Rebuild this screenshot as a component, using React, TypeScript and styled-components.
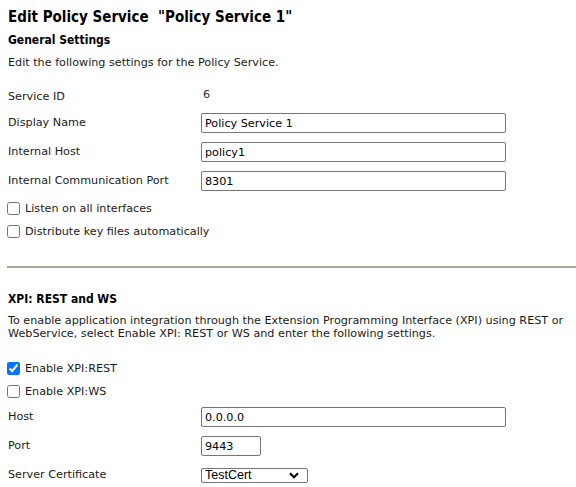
import React from "react";
import styled, { createGlobalStyle } from "styled-components";

const GlobalStyle = createGlobalStyle`
  body {
    margin: 0;
    background: #fff;
    color: #1a1a1a;
    font-family: "DejaVu Sans", Verdana, sans-serif;
    font-size: 11.2px;
  }
`;

const Page = styled.div`
  width: 576px;
  height: 487px;
  overflow: hidden;
  padding: 0 0 0 8px;
  box-sizing: border-box;
`;

const Title = styled.h1`
  margin: 7px 0 0;
  font-family: "DejaVu Sans Condensed", "DejaVu Sans", sans-serif;
  font-size: 15px;
  line-height: 20px;
  font-weight: bold;
  color: #000;
  white-space: pre;
`;

const SectionTitle = styled.h2<{ $top: number }>`
  margin: ${(p) => p.$top}px 0 0;
  font-family: "DejaVu Sans Condensed", "DejaVu Sans", sans-serif;
  font-size: 12px;
  line-height: 16px;
  font-weight: bold;
  color: #000;
`;

const Intro = styled.p<{ $top: number }>`
  margin: ${(p) => p.$top}px 0 0;
  line-height: 13px;
  white-space: pre-line;
`;

const Fields = styled.div<{ $top: number }>`
  margin-top: ${(p) => p.$top}px;
  display: grid;
  grid-template-columns: 193px 1fr;
  row-gap: 9px;
  align-items: center;
`;

const Label = styled.span<{ $h?: number }>`
  line-height: ${(p) => p.$h ?? 20}px;
`;

const Value = styled.span`
  color: #2a2a4a;
  padding-left: 2px;
  line-height: 14px;
  position: relative;
  top: -2px;
`;

const TextInput = styled.input<{ $w: number }>`
  width: ${(p) => p.$w}px;
  height: 20px;
  box-sizing: border-box;
  border: 1px solid #767676;
  border-radius: 2px;
  padding: 0 3px;
  font-family: inherit;
  font-size: 11.2px;
  color: #000;
`;

const SelectWrap = styled.div`
  position: relative;
  width: 107px;
  height: 15px;
`;

const Select = styled.select`
  appearance: none;
  display: block;
  width: 107px;
  height: 15px;
  box-sizing: border-box;
  border: 1px solid #767676;
  border-radius: 2px;
  padding: 0 3px;
  font-family: "Liberation Sans", Arial, sans-serif;
  font-size: 12.5px;
  line-height: 13px;
  color: #000;
  background: #fff;
`;

const Chevron = styled.svg`
  position: absolute;
  right: 9px;
  top: 4px;
  pointer-events: none;
`;

const CheckRow = styled.label`
  display: flex;
  align-items: center;
  height: 23px;
  gap: 5px;
`;

const Box = styled.input`
  margin: 0;
  width: 13px;
  height: 13px;
  accent-color: #0075ff;
`;

const Rule = styled.hr`
  margin: 23px 0 0 -1px;
  border: none;
  height: 2px;
  background: #a8a898;
`;

const Checks = styled.div<{ $top: number }>`
  margin-top: ${(p) => p.$top}px;
  margin-left: -1px;
`;

export default function App() {
  return (
    <Page>
      <GlobalStyle />
      <Title>Edit Policy Service  "Policy Service 1"</Title>
      <SectionTitle $top={5}>General Settings</SectionTitle>
      <Intro $top={8}>Edit the following settings for the Policy Service.</Intro>

      <Fields $top={21}>
        <Label $h={14}>Service ID</Label>
        <Value>6</Value>
        <Label>Display Name</Label>
        <TextInput $w={305} defaultValue="Policy Service 1" />
        <Label>Internal Host</Label>
        <TextInput $w={305} defaultValue="policy1" />
        <Label>Internal Communication Port</Label>
        <TextInput $w={305} defaultValue="8301" />
      </Fields>

      <Checks $top={6}>
        <CheckRow>
          <Box type="checkbox" />
          Listen on all interfaces
        </CheckRow>
        <CheckRow>
          <Box type="checkbox" />
          Distribute key files automatically
        </CheckRow>
      </Checks>

      <Rule />

      <SectionTitle $top={23}>XPI: REST and WS</SectionTitle>
      <Intro $top={7}>
        {"To enable application integration through the Extension Programming Interface (XPI) using REST or\nWebService, select Enable XPI: REST or WS and enter the following settings."}
      </Intro>

      <Checks $top={17}>
        <CheckRow>
          <Box type="checkbox" defaultChecked />
          Enable XPI:REST
        </CheckRow>
        <CheckRow>
          <Box type="checkbox" />
          Enable XPI:WS
        </CheckRow>
      </Checks>

      <Fields $top={4}>
        <Label>Host</Label>
        <TextInput $w={305} defaultValue="0.0.0.0" />
        <Label>Port</Label>
        <TextInput $w={60} defaultValue="9443" />
        <Label>Server Certificate</Label>
        <SelectWrap>
          <Select defaultValue="TestCert">
            <option>TestCert</option>
          </Select>
          <Chevron width="10" height="7" viewBox="0 0 10 7">
            <path d="M1 1.2 L5 5.2 L9 1.2" fill="none" stroke="#000" strokeWidth="2.2" />
          </Chevron>
        </SelectWrap>
      </Fields>
    </Page>
  );
}
